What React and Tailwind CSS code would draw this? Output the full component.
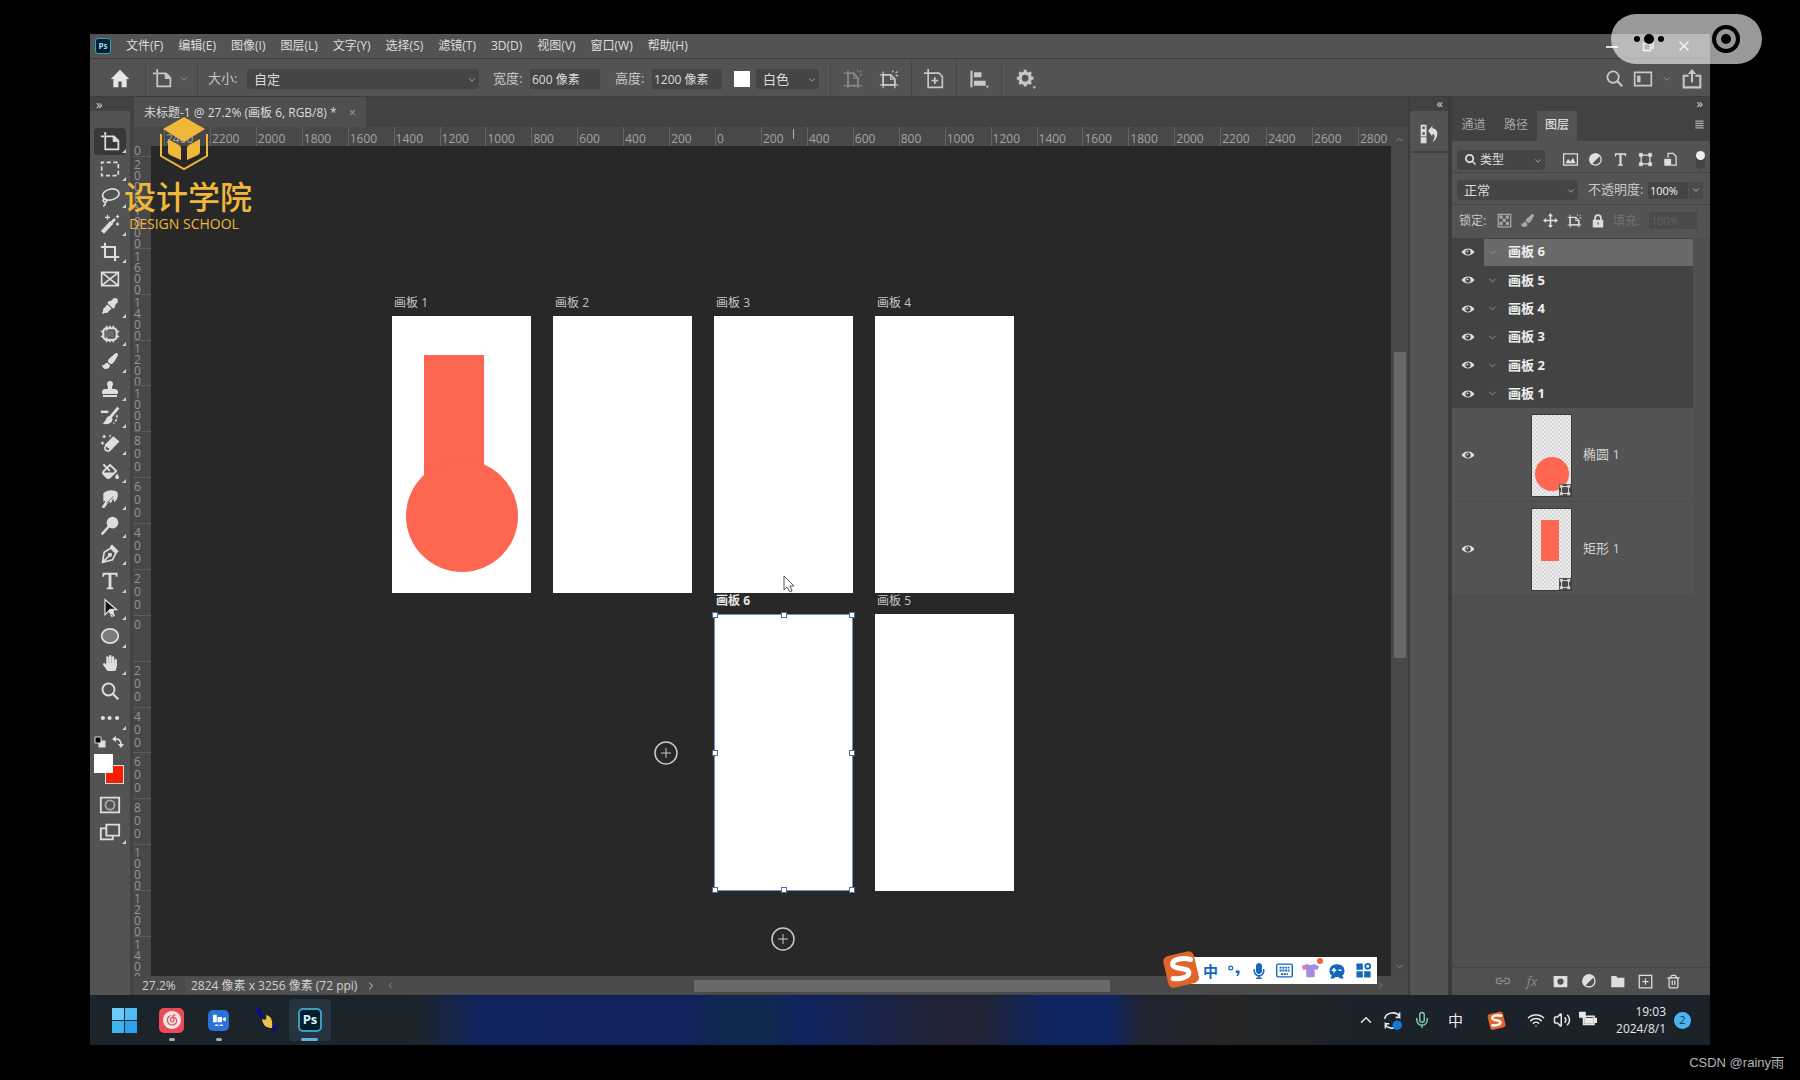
import {
  FaEyeDropper,
  FaFillDrip,
  FaHandPaper,
  FaMicrophone,
  FaPaintBrush,
  FaStamp,
  FaTshirt,
} from "react-icons/fa";
import { SiNeteasecloudmusic } from "react-icons/si";
import {
  ChevronDown,
  ChevronLeft,
  ChevronRight,
  ChevronUp,
  Mic,
  Trash2,
  Volume2,
  Wifi,
} from "lucide-react";

const menus = [
  "文件(F)",
  "编辑(E)",
  "图像(I)",
  "图层(L)",
  "文字(Y)",
  "选择(S)",
  "滤镜(T)",
  "3D(D)",
  "视图(V)",
  "窗口(W)",
  "帮助(H)",
];

const topMarks = [
  2400, 2200, 2000, 1800, 1600, 1400, 1200, 1000, 800, 600, 400, 200, 0, 200,
  400, 600, 800, 1000, 1200, 1400, 1600, 1800, 2000, 2200, 2400, 2600,
];

const sideMarks = [
  2000, 1800, 1600, 1400, 1200, 1000, 800, 600, 400, 200, 0, 200, 400, 600,
  800, 1000, 1200,
];

const boards = [6, 5, 4, 3, 2, 1];

function Svg({ size = 20, className = "", children }) {
  return (
    <svg
      width={size}
      height={size}
      viewBox="0 0 24 24"
      fill="none"
      stroke="currentColor"
      strokeWidth="2"
      className={`shrink-0 ${className}`}
      aria-hidden="true"
    >
      {children}
    </svg>
  );
}

function ArtboardIcon({ size = 22, className }) {
  return (
    <Svg size={size} className={className}>
      <path d="M6 1v4M1 6h4" />
      <path d="M6 6h10l5 5v10H6z" />
      <path d="M15 6v6h6" fill="currentColor" strokeWidth="1" />
    </Svg>
  );
}

function PortraitIcon({ size = 20, className }) {
  return (
    <Svg size={size} className={className}>
      <path d="M6 1v22M1 5h4M1 20h22M18 11v12" strokeWidth="1.5" />
      <path d="M6 5h7l5 6v9H6z" />
      <path d="M13 5v6h5M17 3l1-2M20 7h3M20 4l2-2" strokeWidth="1.5" />
    </Svg>
  );
}

function LandscapeIcon({ size = 20, className }) {
  return (
    <Svg size={size} className={className}>
      <path d="M5 3v20M1 7h4M1 19h22M19 12v11" strokeWidth="1.5" />
      <path d="M5 7h9l5 5v7H5z" />
      <path d="M14 7v5h5M16 4l1-2M20 8h3M20 5l2-2" strokeWidth="1.5" />
    </Svg>
  );
}

function ShapeIcon({ size = 16, className }) {
  return (
    <Svg size={size} className={className}>
      <path d="M5 5h14v14H5z" />
      <path
        d="M2 2h5v5H2zM17 2h5v5h-5zM2 17h5v5H2zM17 17h5v5h-5z"
        fill="currentColor"
        strokeWidth="1"
      />
    </Svg>
  );
}

function AdjustIcon({ size = 16 }) {
  return (
    <Svg size={size}>
      <circle cx="12" cy="12" r="9" />
      <path d="M5.5 18.5A9 9 0 0 1 18.5 5.5z" fill="currentColor" />
    </Svg>
  );
}

function SearchIcon({ size = 18, strokeWidth = 2.5 }) {
  return (
    <Svg size={size}>
      <circle cx="10" cy="10" r="8" strokeWidth={strokeWidth} />
      <path d="M16 16l7 7" strokeWidth="3" />
    </Svg>
  );
}

function TypeIcon({ size = 20 }) {
  return (
    <Svg size={size}>
      <path
        d="M3 2h18v5h-1.5l-1-2.5H13.7v15l2.3.7V22H8v-1.8l2.3-.7v-15H5.5L4.5 7H3z"
        fill="currentColor"
        stroke="none"
      />
    </Svg>
  );
}

function EyeIcon() {
  return (
    <Svg size={14}>
      <path
        d="M1 12c5-8 17-8 22 0-5 8-17 8-22 0z"
        fill="currentColor"
        stroke="none"
      />
      <circle cx="12" cy="12" r="4.5" fill="#434343" stroke="none" />
      <circle cx="11" cy="11" r="1.5" fill="currentColor" stroke="none" />
    </Svg>
  );
}

function SogouIcon({ size = 34 }) {
  return (
    <svg
      width={size}
      height={size}
      viewBox="0 0 34 34"
      className="shrink-0"
      aria-hidden="true"
    >
      <rect
        x="3"
        y="3"
        width="28"
        height="29"
        rx="5"
        fill="#e2642a"
        transform="rotate(-13 17 17)"
      />
      <path
        d="M25.5 8.5C18 6.5 9 8.5 9.5 13c.5 4.5 14 2.5 14.5 7 .4 4.5-8 6.5-14 5.5"
        fill="none"
        stroke="#fff"
        strokeWidth="4.5"
        strokeLinecap="round"
      />
    </svg>
  );
}

const tools = [
  { name: "画板工具", icon: <ArtboardIcon size={21} /> },
  {
    name: "矩形选框工具",
    icon: (
      <Svg>
        <path d="M2 4h20v16H2z" strokeDasharray="5 3" strokeDashoffset="2" />
      </Svg>
    ),
  },
  {
    name: "套索工具",
    icon: (
      <Svg>
        <ellipse cx="13" cy="9" rx="10" ry="6.5" transform="rotate(-12 13 9)" />
        <path d="M6 14c-4 1-2 5 1 4s0-4-2-3M6 18c1 2 0 4-2 5" />
      </Svg>
    ),
  },
  {
    name: "魔棒工具",
    icon: (
      <Svg>
        <path d="M3 22L14 10" strokeWidth="5" />
        <path d="M14 10l4-4" strokeWidth="3" />
        <path d="M9 1v6M6 4h6M21 1v4M19 3h4M21 10v4M19 12h4" strokeWidth="1.5" />
      </Svg>
    ),
  },
  {
    name: "裁剪工具",
    icon: (
      <Svg>
        <path d="M6 1v17h17M1 6h17v17" strokeWidth="2.5" />
      </Svg>
    ),
  },
  {
    name: "图框工具",
    icon: (
      <Svg>
        <path d="M2 4h20v16H2zM2 4l20 16M22 4L2 20" />
      </Svg>
    ),
  },
  { name: "吸管工具", icon: <FaEyeDropper size={16} /> },
  {
    name: "修补工具",
    icon: (
      <Svg>
        <rect x="4" y="5" width="16" height="14" rx="4" strokeWidth="2.5" />
        <path d="M8 2v20M12 2v3M12 19v3M16 2v3M16 19v3M8 2v3M1 9h4M1 15h4M19 9h4M19 15h4" />
        <path d="M7 8h10v8H7z" fill="#6b6b6b" stroke="none" />
      </Svg>
    ),
  },
  { name: "画笔工具", icon: <FaPaintBrush size={16} /> },
  { name: "仿制图章工具", icon: <FaStamp size={16} /> },
  {
    name: "历史记录画笔工具",
    icon: (
      <Svg>
        <path d="M22 2L12 14" strokeWidth="3.5" />
        <path
          d="M12 12c-5 0-4 6-9 9 6 2 12 0 12-6z"
          fill="currentColor"
          stroke="none"
        />
        <path d="M1 7h9" strokeWidth="3" />
        <path d="M20 11c1 4-1 8-4 10" strokeDasharray="3 2" />
      </Svg>
    ),
  },
  {
    name: "背景橡皮擦工具",
    icon: (
      <Svg>
        <path d="M16 4l6 5-9 9-6-5z" fill="currentColor" />
        <path d="M9 12l-3 4c-1 3 2 5 5 4l4-4" />
        <path d="M5 1v4M3 3h4M3 9v4M1 11h4M12 1v3" strokeWidth="1.5" />
      </Svg>
    ),
  },
  { name: "油漆桶工具", icon: <FaFillDrip size={17} /> },
  {
    name: "涂抹工具",
    icon: (
      <Svg>
        <path
          d="M4 5c4-4 13-5 17-1 1 5 0 9-4 12l-1-5-3 6-2-2-6 8-3-1 5-8-3 1z"
          fill="currentColor"
          stroke="none"
        />
        <path d="M16 9l-8 8" stroke="#535353" strokeWidth="1" />
      </Svg>
    ),
  },
  {
    name: "减淡工具",
    icon: (
      <Svg>
        <circle cx="15" cy="8" r="7" fill="currentColor" stroke="none" />
        <path d="M11 12L2 22" strokeWidth="3" />
      </Svg>
    ),
  },
  {
    name: "钢笔工具",
    icon: (
      <Svg>
        <path d="M3 22l2-12 8-5 6 6-4 8zM4 21l8-8" />
        <path d="M13 2l8 8" strokeWidth="4" />
        <circle cx="12" cy="13" r="1.5" fill="currentColor" />
      </Svg>
    ),
  },
  { name: "横排文字工具", icon: <TypeIcon /> },
  {
    name: "直接选择工具",
    icon: (
      <Svg>
        <path
          d="M6 2v18l5-5 3 7 3-1-3-7h6z"
          fill="#111111"
          strokeWidth="1.5"
        />
        <path d="M9 16l3-3h5l-1 8z" fill="currentColor" stroke="none" />
      </Svg>
    ),
  },
  {
    name: "椭圆工具",
    icon: (
      <Svg>
        <ellipse cx="12" cy="12" rx="10" ry="8.5" fill="#7b7b7b" />
      </Svg>
    ),
  },
  { name: "抓手工具", icon: <FaHandPaper size={16} /> },
  { name: "缩放工具", icon: <SearchIcon size={18} /> },
  {
    name: "编辑工具栏",
    icon: (
      <Svg>
        <path
          d="M1 12a2 2 0 1 0 5 0a2 2 0 1 0-5 0M9 12a2 2 0 1 0 5 0a2 2 0 1 0-5 0M18 12a2 2 0 1 0 5 0a2 2 0 1 0-5 0"
          fill="currentColor"
          stroke="none"
        />
      </Svg>
    ),
  },
];

function Corner() {
  return (
    <svg
      width="4"
      height="4"
      viewBox="0 0 4 4"
      className="absolute right-0 bottom-[2px]"
      aria-hidden="true"
    >
      <path d="M4 0v4H0z" fill="#d0d0d0" />
    </svg>
  );
}

function Picker({ label, value, className }) {
  return (
    <div className={`relative ${className}`}>
      <select
        aria-label={label}
        className="h-full w-full appearance-none rounded-sm bg-[#454545] pl-[7px] text-[13px] leading-4 text-[#dcdcdc]"
        defaultValue={value}
      >
        <option>{value}</option>
      </select>
      <ChevronDown
        size={10}
        className="pointer-events-none absolute right-[2px] bottom-1 text-[#b5b5b5]"
      />
    </div>
  );
}

function Divider() {
  return <div className="w-px self-stretch bg-[#474747]" />;
}

function MenuBar() {
  return (
    <header className="flex h-[25px] items-center border-b border-[#3d3d3d] bg-[#535353] pl-[5px]">
      <span className="flex h-4 w-4 items-center justify-center rounded-[3px] border border-[#2fa3c4] bg-[#00202f] text-[8px] font-bold text-[#9fdcf5]">
        Ps
      </span>
      <nav className="ml-[15px] flex gap-[15px]">
        {menus.map((menu) => (
          <button key={menu} type="button" className="text-xs leading-5">
            {menu}
          </button>
        ))}
      </nav>
      <div className="ml-auto flex items-center gap-6 pr-5">
        <button type="button" aria-label="最小化">
          <Svg size={12}>
            <path d="M0 14h24" strokeWidth="4" />
          </Svg>
        </button>
        <button type="button" aria-label="还原">
          <Svg size={12}>
            <path d="M3 7h14v14H3zM8 6V3h14v13h-4" strokeWidth="3" />
          </Svg>
        </button>
        <button type="button" aria-label="关闭">
          <Svg size={12}>
            <path d="M3 3l18 18M21 3L3 21" strokeWidth="3" />
          </Svg>
        </button>
      </div>
    </header>
  );
}

function OptionsBar() {
  return (
    <div className="flex h-[38px] items-center border-b border-[#3d3d3d] bg-[#535353] pt-[2px] text-[13px] text-[#c8c8c8]">
      <button
        type="button"
        aria-label="主页"
        className="flex w-[55px] justify-center pl-1"
      >
        <Svg size={20}>
          <path
            d="M12 1L1 12h3v10h6v-7h4v7h6V12h3z"
            fill="#e6e6e6"
            stroke="none"
          />
        </Svg>
      </button>
      <Divider />
      <button
        type="button"
        aria-label="画板预设"
        className="flex w-[51px] items-center gap-[6px] pl-[6px]"
      >
        <ArtboardIcon size={21} />
        <ChevronDown size={10} className="text-[#a0a0a0]" />
      </button>
      <Divider />
      <span className="ml-[10px] w-[39px]">大小:</span>
      <Picker label="大小" value="自定" className="h-5 w-[232px]" />
      <label htmlFor="board-width" className="ml-[14px] w-[37px]">
        宽度:
      </label>
      <input
        id="board-width"
        defaultValue="600 像素"
        className="h-5 w-[70px] bg-[#454545] pl-[2px] text-xs text-[#dcdcdc]"
      />
      <label htmlFor="board-height" className="ml-[15px] w-[37px]">
        高度:
      </label>
      <input
        id="board-height"
        defaultValue="1200 像素"
        className="h-5 w-[70px] bg-[#454545] pl-[2px] text-xs text-[#dcdcdc]"
      />
      <button
        type="button"
        aria-label="背景颜色"
        className="ml-3 h-4 w-4 bg-white"
      />
      <Picker
        label="背景"
        value="白色"
        className="mr-[11px] ml-[6px] h-5 w-[63px]"
      />
      <Divider />
      <div className="flex w-20 justify-between px-3">
        <button type="button" aria-label="纵向">
          <PortraitIcon className="text-[#888888]" />
        </button>
        <button type="button" aria-label="横向">
          <LandscapeIcon />
        </button>
      </div>
      <Divider />
      <button
        type="button"
        aria-label="添加新画板"
        className="flex w-11 justify-center"
      >
        <Svg size={20}>
          <path d="M5 0v22h17V9l-4-4H0M13 10v8M9 14h8" />
        </Svg>
      </button>
      <Divider />
      <button
        type="button"
        aria-label="对齐"
        className="flex w-11 justify-center"
      >
        <Svg size={20}>
          <path d="M3 2v20" strokeWidth="2.5" />
          <path
            d="M6 4h9v6H6zM6 14h14v6H6zM20 20h4l-2 3z"
            fill="currentColor"
            stroke="none"
          />
        </Svg>
      </button>
      <Divider />
      <button
        type="button"
        aria-label="设置"
        className="flex w-12 justify-center"
      >
        <Svg size={20}>
          <circle cx="11" cy="11" r="6" strokeWidth="4" />
          <path
            d="M11 1v3M11 18v3M1 11h3M18 11h3M4 4l2 2M16 16l2 2M4 18l2-2M16 6l2-2"
            strokeWidth="3.5"
          />
          <path d="M20 21h4l-2 3z" fill="currentColor" stroke="none" />
        </Svg>
      </button>
      <div className="ml-auto flex items-center gap-[10px] pr-2">
        <button type="button" aria-label="搜索">
          <SearchIcon size={17} />
        </button>
        <button
          type="button"
          aria-label="工作区"
          className="flex items-center gap-[9px]"
        >
          <Svg size={20}>
            <path d="M2 4h20v16H2z" />
            <path d="M5 8h4v8H5z" fill="currentColor" stroke="none" />
          </Svg>
          <ChevronDown size={10} className="text-[#a0a0a0]" />
        </button>
        <button type="button" aria-label="共享">
          <Svg size={20}>
            <path d="M8 8H2v14h20V8h-6M12 16V3" strokeWidth="2.5" />
            <path d="M7 6l5-6 5 6z" fill="currentColor" stroke="none" />
          </Svg>
        </button>
      </div>
    </div>
  );
}

function ToolBar() {
  return (
    <aside className="flex w-[43px] shrink-0 flex-col border-r-[3px] border-[#424242] bg-[#535353]">
      <button
        type="button"
        aria-label="展开工具栏"
        className="h-[14px] bg-[#424242] pl-[6px] text-left text-[13px] leading-3 text-[#d8d8d8]"
      >
        »
      </button>
      <div className="mt-[17px] flex h-[604px] flex-col">
        {tools.map((tool, i) => (
          <button
            key={tool.name}
            type="button"
            aria-label={tool.name}
            className={`relative mx-1 flex flex-1 items-center justify-center rounded-sm ${
              i === 0 ? "bg-[#383838]" : ""
            }`}
          >
            {tool.icon}
            {i !== 5 && i !== 20 && <Corner />}
          </button>
        ))}
      </div>
      <div className="mt-1 flex justify-between pr-[6px] pl-1">
        <button type="button" aria-label="默认颜色">
          <Svg size={12}>
            <path d="M9 9h14v14H9z" fill="#e0e0e0" stroke="none" />
            <path d="M2 2h12v12H2z" fill="#000000" />
          </Svg>
        </button>
        <button type="button" aria-label="切换颜色">
          <Svg size={12}>
            <path d="M6 6c8-1 12 3 12 12" strokeWidth="3" />
            <path
              d="M8 0v12L0 6zM12 16h12l-6 8z"
              fill="currentColor"
              stroke="none"
            />
          </Svg>
        </button>
      </div>
      <div className="relative mt-[6px] ml-1 h-[30px] w-[30px]">
        <button
          type="button"
          aria-label="背景色"
          className="absolute right-0 bottom-0 h-[19px] w-[19px] border border-[#e0e0e0] bg-[#f81d00]"
        />
        <button
          type="button"
          aria-label="前景色"
          className="absolute top-0 left-0 h-[19px] w-[19px] bg-white"
        />
      </div>
      <button
        type="button"
        aria-label="快速蒙版"
        className="mt-[10px] flex h-6 justify-center"
      >
        <Svg size={22}>
          <path d="M2 4h20v16H2z" />
          <circle cx="12" cy="12" r="5" stroke="#a8a8a8" />
        </Svg>
      </button>
      <button
        type="button"
        aria-label="屏幕模式"
        className="relative mx-1 mt-[3px] flex h-[25px] justify-center"
      >
        <Svg size={22}>
          <path d="M8 8H2v12h13v-4" />
          <path d="M8 4h14v12H8z" />
        </Svg>
        <Corner />
      </button>
    </aside>
  );
}

function Artboard({ n, x, y, active, children }) {
  return (
    <section className="absolute w-[139px]" style={{ left: x, top: y }}>
      <h2
        className={`absolute -top-[21px] left-[2px] text-xs leading-4 ${
          active ? "font-bold text-[#e8e8e8]" : "text-[#c4c4c4]"
        }`}
      >
        画板 {n}
      </h2>
      <div className="h-[277px] bg-white">{children}</div>
    </section>
  );
}

function Handle({ className }) {
  return (
    <span
      className={`absolute h-[6px] w-[6px] border border-[#4a6f9c] bg-white ${className}`}
    />
  );
}

function AddBoard({ x, y, label }) {
  return (
    <button
      type="button"
      aria-label={label}
      className="absolute text-[#c8c8c8]"
      style={{ left: x, top: y }}
    >
      <Svg size={24}>
        <circle cx="12" cy="12" r="11" strokeWidth="1.5" />
        <path d="M12 7v10M7 12h10" strokeWidth="1" />
      </Svg>
    </button>
  );
}

function SchoolMark() {
  return (
    <div className="absolute -top-[29px] -left-[27px] flex w-[128px] flex-col items-center text-[#f0b83a]">
      <svg
        width="50"
        height="54"
        viewBox="0 0 50 54"
        className="mr-[9px]"
        aria-hidden="true"
      >
        <path d="M25 0l21 12-21 13L4 12z" fill="currentColor" />
        <path
          d="M2 17v22l23 13 23-13V17"
          fill="none"
          stroke="currentColor"
          strokeWidth="2"
        />
        <path
          d="M9 22l11 6q2 1 2 3v12l-11-5q-2-1-2-3zM41 22l-11 6q-2 1-2 3v12l11-5q2-1 2-3z"
          fill="currentColor"
        />
      </svg>
      <p className="mt-[10px] text-[32px] leading-8 font-medium whitespace-nowrap">
        设计学院
      </p>
      <p className="mt-px mr-2 text-sm leading-5 whitespace-nowrap">
        DESIGN SCHOOL
      </p>
    </div>
  );
}

function ImeBar() {
  return (
    <div className="absolute right-[14px] bottom-[-8px] flex h-[27px] w-[188px] items-center justify-between bg-white pr-[5px] pl-[14px] text-[#1467bd]">
      <div className="absolute -top-[7px] -left-[27px]">
        <SogouIcon size={38} />
      </div>
      <button type="button" className="text-[15px] leading-5 font-bold">
        中
      </button>
      <button type="button" aria-label="标点">
        <Svg size={15}>
          <circle cx="6" cy="8" r="3" strokeWidth="2" />
          <path
            d="M14 12h6c1 5-1 8-4 9l-1-2c2-1 2-2 2-3h-3z"
            fill="currentColor"
            stroke="none"
          />
        </Svg>
      </button>
      <button type="button" aria-label="语音输入">
        <FaMicrophone size={16} />
      </button>
      <button type="button" aria-label="软键盘">
        <Svg size={17}>
          <rect x="1" y="3" width="22" height="18" rx="2" />
          <path
            d="M5 8h14M5 12h14M7 17h10"
            strokeWidth="2.5"
            strokeDasharray="3 1"
          />
        </Svg>
      </button>
      <button type="button" aria-label="皮肤" className="relative text-[#a58be0]">
        <FaTshirt size={17} />
        <span className="absolute -top-1 -right-1 h-[6px] w-[6px] rounded-full bg-[#f2603c]" />
        <span className="absolute top-[3px] left-0 h-1 w-1 rounded-full bg-[#ee7f8c]" />
      </button>
      <button type="button" aria-label="游戏">
        <Svg size={18}>
          <path
            d="M12 3c7 0 10 4 10 9 0 3-1 5-3 6l2 4h-5l-2-2h-4l-2 2H3l2-4c-2-1-3-3-3-6 0-5 3-9 10-9z"
            fill="currentColor"
            stroke="none"
          />
          <path
            d="M8 8v6M5 11h6M14 11h4"
            stroke="#ffffff"
            strokeWidth="2"
          />
        </Svg>
      </button>
      <button type="button" aria-label="工具箱">
        <Svg size={17}>
          <path
            d="M2 2h9v9H2zM2 13h9v9H2zM13 13h9v9h-9z"
            fill="currentColor"
            stroke="none"
          />
          <circle cx="18" cy="6" r="3.5" strokeWidth="2.5" />
        </Svg>
      </button>
    </div>
  );
}

function Canvas() {
  return (
    <div className="relative flex-1 bg-[#282828]">
      <Artboard n={1} x={241} y={170}>
        <svg width="139" height="277" viewBox="0 0 139 277" aria-hidden="true">
          <rect x="32" y="39" width="60" height="130" fill="#fd6651" />
          <circle cx="70" cy="200" r="56" fill="#fd6651" />
        </svg>
      </Artboard>
      <Artboard n={2} x={402} y={170} />
      <Artboard n={3} x={563} y={170} />
      <Artboard n={4} x={724} y={170} />
      <Artboard n={6} x={563} y={468} active>
        <div className="relative h-full border border-[#6f97c6]">
          <Handle className="-top-[3px] -left-[3px]" />
          <Handle className="-top-[3px] left-[66px]" />
          <Handle className="-top-[3px] -right-[3px]" />
          <Handle className="top-[135px] -left-[3px]" />
          <Handle className="top-[135px] -right-[3px]" />
          <Handle className="-bottom-[3px] -left-[3px]" />
          <Handle className="-bottom-[3px] left-[66px]" />
          <Handle className="-right-[3px] -bottom-[3px]" />
        </div>
      </Artboard>
      <Artboard n={5} x={724} y={468} />
      <AddBoard x={503} y={595} label="在左侧添加画板" />
      <AddBoard x={620} y={781} label="在下方添加画板" />
      <svg
        width="12"
        height="18"
        viewBox="0 0 12 18"
        className="absolute top-[429px] left-[632px]"
        aria-hidden="true"
      >
        <path
          d="M1 1v14l3-3 3 5 2-1-2-5h4z"
          fill="#ffffff"
          stroke="#555555"
        />
      </svg>
      <SchoolMark />
      <ImeBar />
    </div>
  );
}

function TopRuler() {
  return (
    <div
      className="relative flex h-[19px] bg-[#484848] pl-[31px] text-xs leading-4 text-[#a3a3a3]"
      aria-hidden="true"
    >
      {topMarks.map((mark, i) => (
        <div
          key={i}
          className="min-w-0 flex-1 border-l border-[#636363] pt-1 pl-px"
        >
          {mark}
        </div>
      ))}
      <div className="w-[33px] border-l border-[#636363] pt-1 pl-px">2800</div>
      <span className="absolute top-[2px] left-[660px] h-[10px] w-px bg-[#b0b0b0]" />
    </div>
  );
}

// the column is one digit wide, so the number breaks into a stack
function SideMark({ value, className }) {
  return (
    <div
      className={`border-t border-[#5c5c5c] pt-[2px] pl-px ${
        value > 999 ? "leading-[11px]" : "leading-[13px]"
      } ${className}`}
    >
      <span className="block w-2 break-all">{value}</span>
    </div>
  );
}

function SideRuler() {
  return (
    <div
      className="relative flex w-[18px] shrink-0 flex-col overflow-hidden bg-[#484848] text-xs text-[#959595]"
      aria-hidden="true"
    >
      <span className="h-[10px] pl-px leading-[10px]">0</span>
      {sideMarks.map((mark, i) => (
        <SideMark key={i} value={mark} className="min-h-0 flex-1" />
      ))}
      <SideMark value={1400} className="h-10" />
    </div>
  );
}

function Workspace() {
  return (
    <main className="flex min-w-0 flex-1 flex-col">
      <div className="flex h-[30px] bg-[#424242]">
        <div className="ml-px flex items-center gap-3 bg-[#4f4f4f] px-[10px] pt-[2px] text-xs text-[#dcdcdc]">
          <h1 className="whitespace-nowrap">
            未标题-1 @ 27.2% (画板 6, RGB/8) *
          </h1>
          <button
            type="button"
            aria-label="关闭文档"
            className="text-[13px] text-[#999999]"
          >
            ×
          </button>
        </div>
      </div>
      <div className="flex flex-1">
        <div className="flex min-w-0 flex-1 flex-col">
          <TopRuler />
          <div className="flex flex-1">
            <SideRuler />
            <Canvas />
          </div>
        </div>
        <div className="flex w-[17px] flex-col items-center bg-[#484848] pt-[7px] pb-1 text-[#8a8a8a]">
          <ChevronUp size={11} />
          <div className="mt-[207px] h-[306px] w-3 bg-[#686868]" />
          <ChevronDown size={11} className="mt-auto" />
        </div>
      </div>
      <footer className="flex h-[19px] items-center bg-[#4a4a4a] text-xs leading-4 text-[#d0d0d0]">
        <span className="w-[52px] pl-[9px]">27.2%</span>
        <span className="bg-[#505050] pl-[6px]">
          2824 像素 x 3256 像素 (72 ppi)
        </span>
        <ChevronRight size={12} className="ml-2" />
        <ChevronLeft size={11} className="ml-2 text-[#8a8a8a]" />
        <div className="flex flex-1 justify-center pl-8">
          <div className="h-3 w-[416px] bg-[#696969]" />
        </div>
        <ChevronRight size={11} className="mr-[22px] text-[#8a8a8a]" />
      </footer>
    </main>
  );
}

function LayerRow({ n, selected }) {
  return (
    <li className="flex flex-1 items-center">
      <button
        type="button"
        aria-label={`切换画板 ${n} 可见性`}
        className="flex w-8 justify-center"
      >
        <EyeIcon />
      </button>
      <button
        type="button"
        className={`flex h-[27px] flex-1 items-center gap-[10px] pl-[3px] text-left text-[13px] font-bold text-[#eeeeee] ${
          selected ? "bg-[#696969]" : ""
        }`}
      >
        <ChevronDown size={11} className="text-[#999999]" />
        画板 {n}
      </button>
    </li>
  );
}

function ShapeLayer({ name, children }) {
  return (
    <li className="flex h-[94px] items-center border-b border-[#4d4d4d] pt-px">
      <button
        type="button"
        aria-label={`切换${name}可见性`}
        className="flex w-8 justify-center"
      >
        <EyeIcon />
      </button>
      <div className="relative ml-[47px] h-[83px] w-[41px] border border-[#3a3a3a] bg-[#efefef]">
        <svg width="39" height="81" viewBox="0 0 39 81" aria-hidden="true">
          <defs>
            <pattern
              id="checks"
              width="4"
              height="4"
              patternUnits="userSpaceOnUse"
            >
              <path d="M0 0h2v2H0zM2 2h2v2H2z" fill="#d6d6d6" />
            </pattern>
          </defs>
          <rect width="39" height="81" fill="url(#checks)" />
          {children}
        </svg>
        <span className="absolute right-0 bottom-0 bg-[#4a4a4a] text-[#d0d0d0]">
          <ShapeIcon size={12} />
        </span>
      </div>
      <span className="ml-[11px] text-[13px] text-[#d4d4d4]">{name}</span>
    </li>
  );
}

function LayersPanel() {
  return (
    <section className="flex w-[258px] shrink-0 flex-col bg-[#4f4f4f]">
      <div className="h-[14px] bg-[#424242] pr-[7px] text-right text-[13px] leading-3 text-[#d8d8d8]">
        »
      </div>
      <div className="flex h-[30px] items-stretch bg-[#424242] pr-[6px] text-xs text-[#a5a5a5]">
        <button type="button" className="w-[43px] pb-[3px]">
          通道
        </button>
        <button type="button" className="w-[42px] pb-[3px]">
          路径
        </button>
        <button
          type="button"
          className="w-10 bg-[#535353] pb-[3px] text-[#f0f0f0]"
        >
          图层
        </button>
        <button
          type="button"
          aria-label="面板菜单"
          className="ml-auto pb-1 text-[#b0b0b0]"
        >
          <Svg size={9}>
            <path d="M1 3h22M1 9h22M1 15h22M1 21h22" strokeWidth="3" />
          </Svg>
        </button>
      </div>
      <div className="flex h-8 items-center border-b border-[#454545] bg-[#535353] pt-[6px] pl-[5px]">
        <div className="relative flex h-5 w-[88px] items-center rounded-sm bg-[#454545] pl-2">
          <SearchIcon size={11} strokeWidth={4} />
          <select
            aria-label="过滤类型"
            className="ml-1 w-full appearance-none text-xs"
            defaultValue="类型"
          >
            <option>类型</option>
          </select>
          <ChevronDown
            size={10}
            className="pointer-events-none absolute right-[2px] bottom-1 text-[#b5b5b5]"
          />
        </div>
        <div className="ml-[18px] flex flex-1 items-center gap-[10px]">
          <button type="button" aria-label="像素图层">
            <Svg size={15}>
              <path d="M1 3h22v18H1z" />
              <path
                d="M4 18l4-7 4 4 4-6 4 9z"
                fill="currentColor"
                stroke="none"
              />
            </Svg>
          </button>
          <button type="button" aria-label="调整图层">
            <AdjustIcon size={15} />
          </button>
          <button type="button" aria-label="文字图层">
            <TypeIcon size={15} />
          </button>
          <button type="button" aria-label="形状图层">
            <ShapeIcon size={15} />
          </button>
          <button type="button" aria-label="智能对象">
            <Svg size={15}>
              <path d="M8 9V2h8l5 5v14h-8" />
              <path d="M2 11h11v11H2z" fill="currentColor" stroke="none" />
            </Svg>
          </button>
        </div>
        <button
          type="button"
          aria-label="打开图层过滤"
          className="mr-[5px] flex h-[18px] w-[9px] items-start rounded-full bg-[#444444]"
        >
          <span className="h-[9px] w-[9px] rounded-full bg-[#f0f0f0]" />
        </button>
      </div>
      <div className="flex h-8 items-center border-b border-[#454545] bg-[#535353] pt-[3px] pl-[5px] text-[13px] text-[#c8c8c8]">
        <Picker label="混合模式" value="正常" className="h-5 w-[121px]" />
        <label htmlFor="opacity" className="ml-[10px] w-[60px]">
          不透明度:
        </label>
        <input
          id="opacity"
          defaultValue="100%"
          className="h-[17px] w-10 bg-[#454545] pl-[2px] text-[11px] text-[#eeeeee]"
        />
        <button
          type="button"
          aria-label="不透明度滑块"
          className="ml-px flex h-[17px] w-[14px] items-center justify-center bg-[#4a4a4a]"
        >
          <ChevronDown size={10} />
        </button>
      </div>
      <div className="flex h-[33px] items-center bg-[#535353] pb-[2px] pl-[7px] text-xs text-[#c8c8c8]">
        <span className="w-[38px]">锁定:</span>
        <div className="flex flex-1 items-center gap-[9px] text-[#dcdcdc]">
          <button type="button" aria-label="锁定透明像素">
            <Svg size={15} className="text-[#a8a8a8]">
              <path d="M2 2h20v20H2z" />
              <path
                d="M4 4h5v5H4zM14 4h5v5h-5zM9 9h5v5H9zM4 14h5v5H4zM14 14h5v5h-5z"
                fill="currentColor"
                stroke="none"
              />
            </Svg>
          </button>
          <button type="button" aria-label="锁定图像像素">
            <FaPaintBrush size={13} className="text-[#a8a8a8]" />
          </button>
          <button type="button" aria-label="锁定位置">
            <Svg size={15}>
              <path d="M12 3v18M3 12h18" strokeWidth="2.5" />
              <path
                d="M12 0l4 5H8zM12 24l4-5H8zM0 12l5-4v8zM24 12l-5-4v8z"
                fill="currentColor"
                stroke="none"
              />
            </Svg>
          </button>
          <button type="button" aria-label="锁定画板嵌套">
            <LandscapeIcon size={15} />
          </button>
          <button type="button" aria-label="锁定全部">
            <Svg size={14}>
              <path d="M7 11V7a5 5 0 0 1 10 0v4" strokeWidth="3" />
              <path
                d="M3 10h18v13H3zM11 14v4h2v-4z"
                fill="currentColor"
                fillRule="evenodd"
                stroke="none"
              />
            </Svg>
          </button>
        </div>
        <label htmlFor="fill" className="w-9 text-[#727272]">
          填充:
        </label>
        <input
          id="fill"
          defaultValue="100%"
          disabled
          className="mr-[13px] h-[17px] w-12 bg-[#4a4a4a] pl-[2px] text-[11px] text-[#626262]"
        />
      </div>
      <div className="mr-[17px] flex-1">
        <ul className="flex h-[170px] flex-col bg-[#434343]">
          {boards.map((n) => (
            <LayerRow key={n} n={n} selected={n === 6} />
          ))}
        </ul>
        <ul className="bg-[#535353]">
          <ShapeLayer name="椭圆 1">
            <circle cx="20" cy="59" r="17" fill="#fd6651" />
          </ShapeLayer>
          <ShapeLayer name="矩形 1">
            <rect x="9" y="11" width="18" height="41" fill="#fd6651" />
          </ShapeLayer>
        </ul>
      </div>
      <div className="flex h-7 items-center justify-end gap-[13px] border-t border-[#454545] bg-[#505050] pr-[29px] pb-px">
        <button type="button" aria-label="链接图层">
          <Svg size={16} className="text-[#8a8a8a]">
            <path d="M10 8H6a4 4 0 0 0 0 8h4M14 8h4a4 4 0 0 1 0 8h-4M7 12h10" />
          </Svg>
        </button>
        <button
          type="button"
          aria-label="图层样式"
          className="w-4 text-[13px] leading-4 text-[#8a8a8a] italic"
        >
          fx
        </button>
        <button type="button" aria-label="添加蒙版">
          <Svg size={15}>
            <path
              d="M1 3h22v18H1zM12 7a5 5 0 1 0 0 10a5 5 0 1 0 0-10z"
              fill="currentColor"
              fillRule="evenodd"
              stroke="none"
            />
          </Svg>
        </button>
        <button type="button" aria-label="新建调整图层">
          <AdjustIcon size={16} />
        </button>
        <button type="button" aria-label="新建组">
          <Svg size={15}>
            <path
              d="M2 3h8l2 3h11v15H2z"
              fill="currentColor"
              stroke="none"
            />
          </Svg>
        </button>
        <button type="button" aria-label="新建图层">
          <Svg size={15}>
            <path d="M2 2h20v20H2zM12 7v10M7 12h10" />
          </Svg>
        </button>
        <button type="button" aria-label="删除图层">
          <Trash2 size={15} />
        </button>
      </div>
    </section>
  );
}

function Taskbar() {
  return (
    <footer className="flex h-[50px] items-center bg-[linear-gradient(90deg,#1c242b_20%,#10235c_24%,#12215c_37%,#0f2850_39%,#0f2850_42%,#10235f_44%,#18234c_48%,#1f2335_52%,#1f2335_55%,#0f2560_59%,#0f2560_63%,#1f2330_65%,#242526_70%,#1b2229_78%)] text-[#e8e8e8]">
      <button
        type="button"
        aria-label="开始"
        className="ml-[22px] grid h-[25px] w-[25px] grid-cols-2 gap-px"
      >
        <span className="h-3 bg-[#6dcbf8]" />
        <span className="h-3 bg-[#4fbcf4]" />
        <span className="h-3 bg-[#3fb2f0]" />
        <span className="h-3 bg-[#2aa2ec]" />
      </button>
      <button
        type="button"
        aria-label="网易云音乐"
        className="relative ml-[22px] flex h-[25px] w-[25px] items-center justify-center rounded-[5px] bg-[#ee4a55]"
      >
        <SiNeteasecloudmusic size={18} />
        <span className="absolute -bottom-2 left-[10px] h-[3px] w-[6px] rounded-full bg-[#a8acb0]" />
      </button>
      <button
        type="button"
        aria-label="录屏"
        className="relative ml-6 flex h-[21px] w-[21px] items-center justify-center rounded-[5px] bg-[#2a72d8]"
      >
        <Svg size={18}>
          <path
            d="M4 5h5v10H4zM10 8h6v7h-6zM17 10l4-2v6l-4-2zM7 18h4v2H7zM13 18h4v2h-4z"
            fill="#ffffff"
            stroke="none"
          />
        </Svg>
        <span className="absolute -bottom-[10px] left-2 h-[3px] w-[6px] rounded-full bg-[#a8acb0]" />
      </button>
      <button type="button" aria-label="工具" className="ml-6">
        <svg width="26" height="28" viewBox="0 0 26 28" aria-hidden="true">
          <path d="M1 3l6-1 4 10-2 1zM19 18l5 3-4 7z" fill="#0c0c86" />
          <path
            d="M9 13c4 2 5 0 4-4 5 1 7 5 6 13-5 0-9-2-10-9z"
            fill="#f0c14a"
          />
        </svg>
      </button>
      <button
        type="button"
        aria-label="Photoshop"
        className="relative ml-[10px] flex h-[42px] w-[42px] items-center justify-center rounded bg-[#25343f]"
      >
        <span className="flex h-6 w-6 items-center justify-center rounded-[5px] border-2 border-[#3d9cc0] bg-[#001d2b] text-[13px] font-bold text-[#d8f2fc]">
          Ps
        </span>
        <span className="absolute bottom-0 left-3 h-[3px] w-[17px] rounded-full bg-[#5cb2e4]" />
      </button>
      <div className="ml-auto flex items-center">
        <ChevronUp size={18} strokeWidth={2} />
        <button type="button" aria-label="更新" className="ml-2">
          <Svg size={19}>
            <path d="M2 10C4 1 17 0 21 7V2M21 8h-5M22 14c-2 9-15 10-19 3v5M3 16h5" />
            <circle cx="18" cy="18" r="6" fill="#1677d8" stroke="none" />
          </Svg>
        </button>
        <Mic size={18} className="ml-[11px] text-[#7fc4b8]" />
        <button type="button" className="ml-[17px] text-[15px] leading-5">
          中
        </button>
        <span className="ml-6">
          <SogouIcon size={19} />
        </span>
        <Wifi size={18} className="ml-[21px]" />
        <Volume2 size={18} className="ml-2" />
        <Svg size={18} className="ml-2">
          <path d="M6 7h14v11H6z" />
          <path
            d="M8 10h10v6H8zM21 10h2v5h-2zM1 2h7v6H1z"
            fill="currentColor"
          />
        </Svg>
        <p className="ml-[9px] w-[60px] text-right text-xs leading-[17px]">
          19:03
          <br />
          2024/8/1
        </p>
        <span className="mr-[19px] ml-2 flex h-[17px] w-[17px] items-center justify-center rounded-full bg-[#4db4f0] text-[11px] text-[#10384f]">
          2
        </span>
      </div>
    </footer>
  );
}

export default function App() {
  return (
    <div className="relative flex min-h-screen flex-col bg-black px-[90px] pt-[34px] font-['Open_Sans','Noto_Sans_CJK_SC',sans-serif] text-[#dedede]">
      <MenuBar />
      <OptionsBar />
      <div className="flex flex-1">
        <ToolBar />
        <Workspace />
        <aside className="w-11 shrink-0 border-r-4 border-l-2 border-[#3c3c3c] bg-[#535353]">
          <div className="h-[14px] bg-[#424242] pr-[5px] text-right text-[13px] leading-3 text-[#d8d8d8]">
            «
          </div>
          <button
            type="button"
            aria-label="历史记录"
            className="flex h-[42px] w-full items-center justify-center border-b-2 border-[#424242] pt-[5px]"
          >
            <Svg size={20}>
              <path d="M3 2h5v5H3zM3 9h5v5H3z" />
              <path
                d="M2 16h7v7H2zM11 8l5-6v3c8 0 8 12 0 17 3-5 4-10 0-10v3z"
                fill="currentColor"
                stroke="none"
              />
            </Svg>
          </button>
        </aside>
        <LayersPanel />
      </div>
      <Taskbar />
      <p className="-mr-[74px] flex h-[35px] items-center justify-end font-['Liberation_Sans','Noto_Sans_CJK_SC',sans-serif] text-[13px] text-[#b4b4b4]">
        CSDN @rainy雨
      </p>

      {/* recorder capsule floating over the title bar */}
      <div className="absolute top-[14px] right-[38px] flex h-[50px] w-[151px] items-center justify-between rounded-full bg-white/60 pr-[22px] pl-[22px] text-black">
        <button type="button" aria-label="更多">
          <svg width="32" height="10" viewBox="0 0 32 10" aria-hidden="true">
            <circle cx="4" cy="5" r="3" />
            <circle cx="16" cy="5" r="5" />
            <circle cx="28" cy="5" r="3" />
          </svg>
        </button>
        <button type="button" aria-label="停止">
          <svg width="28" height="28" viewBox="0 0 28 28" aria-hidden="true">
            <circle
              cx="14"
              cy="14"
              r="12"
              fill="none"
              stroke="#000000"
              strokeWidth="4"
            />
            <circle cx="14" cy="14" r="5" />
          </svg>
        </button>
      </div>
    </div>
  );
}
